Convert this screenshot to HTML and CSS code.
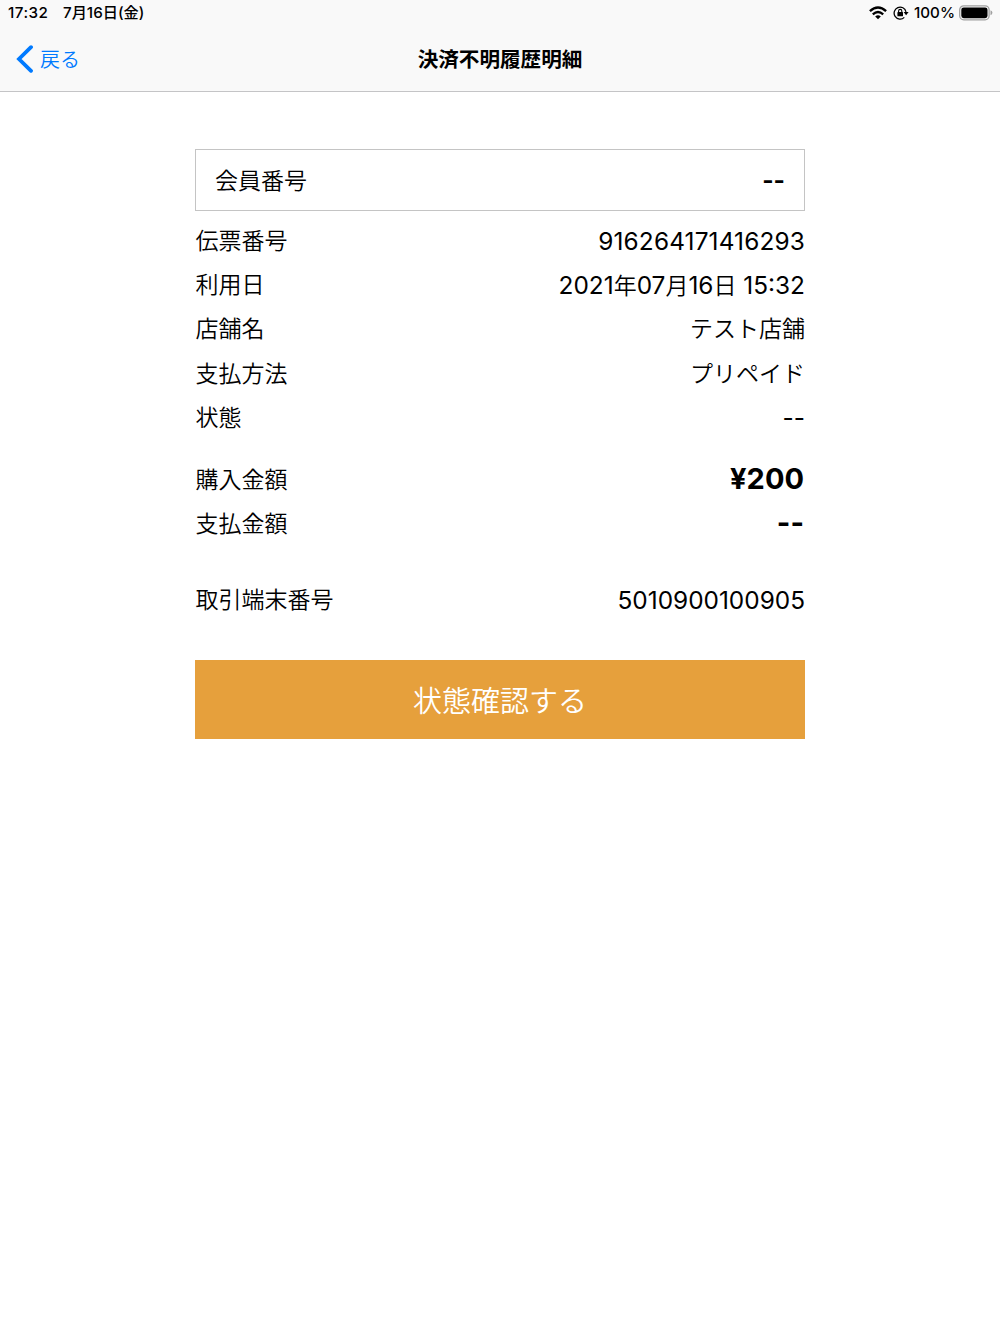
FILE: index.html
```html
<!DOCTYPE html>
<html lang="ja">

	<head>

		<meta charset="UTF-8">
		<link rel="stylesheet" href="styles.css">
		<title>決済不明履歴明細</title>

	</head>

	<body>

		<header class="header">
			<div class="status-bar">
				<span class="status-time">17:32</span>
				<span class="status-date">7月16日(金)</span>
				<svg class="icon-wifi" width="18" height="14" viewBox="0 0 18 14">
					<path d="M0.9 5.1 Q9 -2.1 17.1 5.1" fill="none" stroke="#000" stroke-width="2.4"/>
					<path d="M3.8 8.3 Q9 3.7 14.2 8.3" fill="none" stroke="#000" stroke-width="2.3"/>
					<path d="M9 13.3 L6.2 10.4 Q9 8.1 11.8 10.4 Z"/>
				</svg>
				<svg class="icon-lock" width="16" height="14" viewBox="0 0 16 14">
					<path d="M13 5.8 A6 6 0 1 0 11.3 11.4" fill="none" stroke="#000" stroke-width="1.3"/>
					<path d="M10.6 6 H15.6 L13.1 9.2 Z"/>
					<rect x="4.4" y="6.1" width="5.6" height="4.2" rx="0.6"/>
					<path d="M5.6 6.5 V5 a1.6 1.6 0 0 1 3.2 0 V6.5" fill="none" stroke="#000" stroke-width="1.1"/>
				</svg>
				<span class="status-percent">100%</span>
				<svg class="icon-battery" width="34" height="16" viewBox="0 0 34 16">
					<rect x="0.7" y="0.8" width="29.4" height="14" rx="4" fill="none" stroke="#a0a0a0" stroke-width="1.3"/>
					<rect x="2.3" y="2.4" width="26.2" height="10.8" rx="2.4"/>
					<path d="M31.5 5.3 Q33.4 6 33.4 7.8 Q33.4 9.6 31.5 10.3 Z" fill="#a0a0a0"/>
				</svg>
			</div>
			<div class="nav-bar">
				<a class="btn-back">
					<svg class="icon-back" width="17" height="28" viewBox="0 0 17 28">
						<path d="M15 2.2 L3 14 L15 25.8" fill="none" stroke="#007aff" stroke-width="3.8" stroke-linecap="round" stroke-linejoin="miter"/>
					</svg>
					<span>戻る</span>
				</a>
				<h1 class="title">決済不明履歴明細</h1>
			</div>
		</header>

		<main class="container">
			<div class="member-box">
				<span class="label">会員番号</span>
				<span class="member-value">--</span>
			</div>

			<div class="group">
				<div class="row">
					<span class="label">伝票番号</span>
					<span class="value slip-number">916264171416293</span>
				</div>
				<div class="row">
					<span class="label">利用日</span>
					<span class="value">2021<span class="kanji">年</span>07<span class="kanji">月</span>16<span class="kanji">日</span> 15:32</span>
				</div>
				<div class="row">
					<span class="label">店舗名</span>
					<span class="value kanji">テスト店舗</span>
				</div>
				<div class="row">
					<span class="label">支払方法</span>
					<span class="value kanji">プリペイド</span>
				</div>
				<div class="row">
					<span class="label">状態</span>
					<span class="value">--</span>
				</div>
			</div>

			<div class="group group-amount">
				<div class="row">
					<span class="label">購入金額</span>
					<span class="amount">¥200</span>
				</div>
				<div class="row">
					<span class="label">支払金額</span>
					<span class="amount">--</span>
				</div>
			</div>

			<div class="group group-terminal">
				<div class="row">
					<span class="label">取引端末番号</span>
					<span class="value">5010900100905</span>
				</div>
			</div>

			<button class="btn-confirm">状態確認する</button>
		</main>

	</body>
</html>
```
FILE: styles.css
```css
body {
	margin: 0;
	background: #fff;
	color: #000;
	font-family: "Inter", "Noto Sans CJK JP", sans-serif;
}
.header {
	height: 91px;
	background: #f9f9f9;
	border-bottom: 1px solid #c4c4c6;
}
.status-bar {
	display: flex;
	align-items: center;
	height: 26px;
	padding: 0 7px 0 8px;
	font-size: 15.2px;
	font-weight: 500;
	line-height: 26px;
}
.status-time {
	width: 55px;
	letter-spacing: 0.5px;
}
.status-date {
	flex: 1;
}
.icon-lock {
	margin-left: 6px;
}
.status-percent {
	margin: 0 4px 0 5px;
}
.nav-bar {
	display: grid;
	grid-template-columns: 1fr auto 1fr;
	align-items: center;
	height: 65px;
}
.btn-back {
	display: flex;
	align-items: center;
	gap: 7px;
	padding-left: 16px;
	color: #007aff;
	font-size: 20px;
	font-weight: 350;
}
.title {
	margin: 0;
	padding-bottom: 2px;
	font-size: 20.6px;
	font-weight: 700;
}
.container {
	width: 610px;
	margin: 57px auto 0;
}
.member-box {
	display: flex;
	align-items: center;
	justify-content: space-between;
	box-sizing: border-box;
	height: 62px;
	padding: 0 19px;
	border: 1px solid #c4c4c4;
}
.member-box .label {
	padding-bottom: 2px;
}
.member-value {
	font-size: 24.4px;
	font-weight: 700;
}
.group {
	margin-top: 8px;
}
.group-amount {
	margin-top: 18px;
}
.group-terminal {
	margin-top: 32px;
}
.row {
	display: flex;
	align-items: center;
	justify-content: space-between;
	height: 44.2px;
	line-height: 44px;
}
.row .label {
	padding-left: 0.5px;
}
.label {
	font-size: 23px;
	font-weight: 350;
}
.value {
	font-size: 24.4px;
}
.slip-number {
	letter-spacing: 0.15px;
}
.kanji {
	font-size: 23px;
	font-weight: 350;
}
.amount {
	padding: 0 1px 2px 0;
	font-size: 29px;
	font-weight: 700;
}
.btn-confirm {
	display: block;
	width: 100%;
	height: 79px;
	margin-top: 37px;
	padding: 0;
	border: 0;
	background: #e6a03c;
	color: #fff;
	font-family: inherit;
	font-size: 29px;
	font-weight: 350;
}
```
